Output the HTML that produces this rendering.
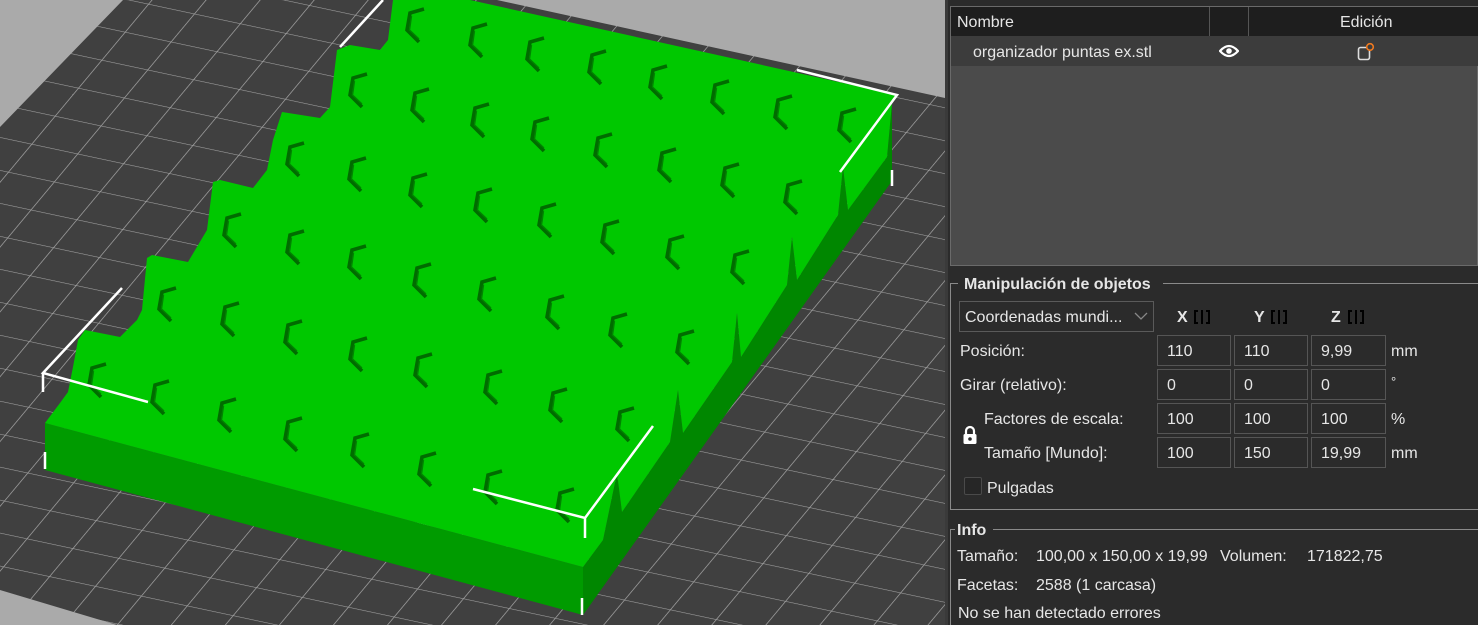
<!DOCTYPE html>
<html><head><meta charset="utf-8">
<style>
*{margin:0;padding:0;box-sizing:border-box}
body{width:1478px;height:625px;overflow:hidden;background:#2b2b2b;font-family:"Liberation Sans",sans-serif;color:#e6e6e6;font-size:16px;position:relative}
.a{position:absolute;white-space:nowrap}
.t{transform:translateY(2px)}
.box{position:absolute;border:1px solid #5e5e5e;background:#2b2b2b}
.fld{position:absolute;border:1px solid #555;background:#2b2b2b;height:31px;line-height:31px;padding-left:9px}
b{font-weight:bold}
</style></head><body>
<svg class="a" style="left:0;top:0" width="945" height="625" viewBox="0 0 945 625">
<defs>
<pattern id="g" patternUnits="userSpaceOnUse" width="1" height="1" patternTransform="matrix(45.9,9.77,-23.35,28,398.8,222)">
<rect width="1" height="1" fill="#404040"/>
<path d="M0 0H1M0 0V1" stroke="#a3a3a3" stroke-width="0.035" fill="none"/>
</pattern>
<g id="c"><path d="M19,1 L5,5 L2,22 L14,34" fill="none" stroke="#006c00" stroke-width="3.6" stroke-linejoin="miter"/><path d="M6.5,8 L4.5,22 L14,31" fill="none" stroke="#008400" stroke-width="1.4"/></g>
</defs>
<rect width="945" height="625" fill="#aaaaaa"/>
<polygon points="123,0 497,0 945,98 945,625 117,625 0,590 0,127" fill="url(#g)"/>
<polygon points="45,423 583,567 583,615 45,470" fill="#009b00"/>
<polygon points="583,567 603,540 617,473 622,512 670,442 678,390 683,433 732,362 737,313 741,357 787,285 792,237 797,280 838,215 843,167 848,210 887,157 892,103 892,181 583,615" fill="#008700"/>
<polygon points="45,423 60,403 68,392 73,367 78,340 85,330 120,337 137,320 142,310 147,258 152,255 188,262 207,230 213,182 220,180 253,188 267,170 273,140 282,112 320,118 330,107 337,50 350,45 380,50 388,40 393,0 470,0 897,95 892,103 887,157 848,210 843,167 838,215 797,280 792,237 787,285 741,357 737,313 732,362 683,433 678,390 670,442 622,512 617,473 603,540 583,567" fill="#00c800"/>
<g>
<use href="#c" x="405" y="8"/><use href="#c" x="468" y="23"/><use href="#c" x="525" y="37"/><use href="#c" x="587" y="50"/><use href="#c" x="648" y="65"/><use href="#c" x="710" y="80"/><use href="#c" x="773" y="95"/><use href="#c" x="837" y="108"/>
<use href="#c" x="348" y="73"/><use href="#c" x="410" y="88"/><use href="#c" x="470" y="103"/><use href="#c" x="530" y="117"/><use href="#c" x="593" y="133"/><use href="#c" x="657" y="148"/><use href="#c" x="720" y="163"/><use href="#c" x="783" y="180"/>
<use href="#c" x="285" y="142"/><use href="#c" x="347" y="157"/><use href="#c" x="408" y="173"/><use href="#c" x="473" y="188"/><use href="#c" x="537" y="203"/><use href="#c" x="600" y="220"/><use href="#c" x="665" y="235"/><use href="#c" x="730" y="250"/>
<use href="#c" x="222" y="213"/><use href="#c" x="285" y="230"/><use href="#c" x="347" y="245"/><use href="#c" x="412" y="263"/><use href="#c" x="477" y="277"/><use href="#c" x="545" y="295"/><use href="#c" x="608" y="313"/><use href="#c" x="675" y="330"/>
<use href="#c" x="157" y="287"/><use href="#c" x="220" y="302"/><use href="#c" x="283" y="320"/><use href="#c" x="348" y="337"/><use href="#c" x="413" y="353"/><use href="#c" x="483" y="370"/><use href="#c" x="548" y="388"/><use href="#c" x="615" y="407"/>
<use href="#c" x="87" y="363"/><use href="#c" x="150" y="380"/><use href="#c" x="217" y="398"/><use href="#c" x="283" y="417"/><use href="#c" x="350" y="433"/><use href="#c" x="417" y="452"/><use href="#c" x="483" y="470"/><use href="#c" x="555" y="488"/>
</g>
<g stroke="#ffffff" stroke-width="2.5" fill="none">
<path d="M122,288 L43,373 L148,402 M43,373 V392"/>
<path d="M45,452 V469"/>
<path d="M473,489 L585,518 L653,426 M585,518 V538"/>
<path d="M582,598 V615"/>
<path d="M797,70 L897,95 L840,172"/>
<path d="M892,170 V186"/>
<path d="M340,47 L383,0"/>
</g>
</svg>
<div class="a" style="left:945px;top:0;width:3px;height:625px;background:#3a3a3a"></div>

<div class="box" style="left:950px;top:6px;width:528px;height:260px;background:#4b4b4b;border-color:#6a6a6a"></div>
<div class="a" style="left:951px;top:7px;width:527px;height:29px;background:#1e1e1e"></div>
<div class="a" style="left:1209px;top:7px;width:1px;height:29px;background:#555"></div>
<div class="a" style="left:1248px;top:7px;width:1px;height:29px;background:#555"></div>
<div class="a t" style="left:957px;top:12px">Nombre</div>
<div class="a t" style="left:1340px;top:12px">Edición</div>
<div class="a" style="left:951px;top:36px;width:527px;height:30px;background:#3c3c3c"></div>
<div class="a t" style="left:973px;top:42px">organizador puntas ex.stl</div>
<svg class="a" style="left:1219px;top:43px" width="20" height="16"><path d="M1,8 Q10,-2 19,8 Q10,18 1,8 Z" fill="none" stroke="#fff" stroke-width="2.2"/><circle cx="10" cy="8" r="2.8" fill="#fff"/></svg>
<svg class="a" style="left:1356px;top:42px" width="20" height="20"><rect x="2.5" y="5.5" width="11" height="12" rx="2" fill="none" stroke="#ddd" stroke-width="1.6"/><circle cx="14" cy="5" r="3.3" fill="#3c3c3c" stroke="#f07a20" stroke-width="1.6"/></svg>

<div class="a" style="left:950px;top:283px;width:1px;height:227px;background:#8a8a8a"></div>
<div class="a" style="left:950px;top:283px;width:8px;height:1px;background:#8a8a8a"></div>
<div class="a" style="left:1163px;top:283px;width:315px;height:1px;background:#8a8a8a"></div>
<div class="a" style="left:950px;top:509px;width:528px;height:1px;background:#8a8a8a"></div>
<div class="a t" style="left:964px;top:274px"><b>Manipulación de objetos</b></div>
<div class="box" style="left:959px;top:301px;width:195px;height:31px;border-color:#5a5a5a"></div>
<div class="a t" style="left:965px;top:307px">Coordenadas mundi...</div>
<svg class="a" style="left:1134px;top:311px" width="14" height="10"><path d="M1,2 L7,8 L13,2" fill="none" stroke="#888" stroke-width="1.3"/></svg>
<div class="a t" style="left:1177px;top:307px"><b>X</b></div>
<div class="a t" style="left:1254px;top:307px"><b>Y</b></div>
<div class="a t" style="left:1331px;top:307px"><b>Z</b></div>
<svg class="a" style="left:1193px;top:309px" width="18" height="16"><path d="M5,2 H2 V14 H5 M13,2 H16 V14 H13 M9,1 V15" fill="none" stroke="#000" stroke-width="2"/></svg>
<svg class="a" style="left:1270px;top:309px" width="18" height="16"><path d="M5,2 H2 V14 H5 M13,2 H16 V14 H13 M9,1 V15" fill="none" stroke="#000" stroke-width="2"/></svg>
<svg class="a" style="left:1347px;top:309px" width="18" height="16"><path d="M5,2 H2 V14 H5 M13,2 H16 V14 H13 M9,1 V15" fill="none" stroke="#000" stroke-width="2"/></svg>

<div class="a t" style="left:960px;top:341px">Posición:</div>
<div class="a t" style="left:960px;top:375px">Girar (relativo):</div>
<div class="a t" style="left:984px;top:409px">Factores de escala:</div>
<div class="a t" style="left:984px;top:443px">Tamaño [Mundo]:</div>
<div class="fld" style="left:1157px;top:335px;width:74px">110</div>
<div class="fld" style="left:1234px;top:335px;width:74px">110</div>
<div class="fld" style="left:1311px;top:335px;width:75px">9,99</div>
<div class="a t" style="left:1391px;top:341px">mm</div>
<div class="fld" style="left:1157px;top:369px;width:74px">0</div>
<div class="fld" style="left:1234px;top:369px;width:74px">0</div>
<div class="fld" style="left:1311px;top:369px;width:75px">0</div>
<div class="a t" style="left:1391px;top:372px;font-size:13px">°</div>
<div class="fld" style="left:1157px;top:403px;width:74px">100</div>
<div class="fld" style="left:1234px;top:403px;width:74px">100</div>
<div class="fld" style="left:1311px;top:403px;width:75px">100</div>
<div class="a t" style="left:1391px;top:409px">%</div>
<div class="fld" style="left:1157px;top:437px;width:74px">100</div>
<div class="fld" style="left:1234px;top:437px;width:74px">150</div>
<div class="fld" style="left:1311px;top:437px;width:75px">19,99</div>
<div class="a t" style="left:1391px;top:443px">mm</div>
<svg class="a" style="left:961px;top:425px" width="18" height="20"><path d="M5,9 V6 A4,4 0 0 1 13,6 V9" fill="none" stroke="#fff" stroke-width="2.2"/><rect x="2.5" y="9" width="13" height="10" rx="1.5" fill="#fff"/><circle cx="9" cy="14" r="1.8" fill="#2b2b2b"/></svg>
<div class="a" style="left:964px;top:477px;width:18px;height:18px;border:1px solid #4a4a4a;border-radius:2px;background:#262626"></div>
<div class="a t" style="left:987px;top:478px">Pulgadas</div>

<div class="a" style="left:950px;top:529px;width:1px;height:96px;background:#8a8a8a"></div>
<div class="a" style="left:950px;top:529px;width:5px;height:1px;background:#8a8a8a"></div>
<div class="a" style="left:993px;top:529px;width:485px;height:1px;background:#8a8a8a"></div>
<div class="a t" style="left:957px;top:520px"><b>Info</b></div>
<div class="a t" style="left:957px;top:546px">Tamaño:</div>
<div class="a t" style="left:1036px;top:546px">100,00 x 150,00 x 19,99</div>
<div class="a t" style="left:1220px;top:546px">Volumen:</div>
<div class="a t" style="left:1307px;top:546px">171822,75</div>
<div class="a t" style="left:957px;top:575px">Facetas:</div>
<div class="a t" style="left:1036px;top:575px">2588 (1 carcasa)</div>
<div class="a t" style="left:958px;top:603px">No se han detectado errores</div>
</body></html>
